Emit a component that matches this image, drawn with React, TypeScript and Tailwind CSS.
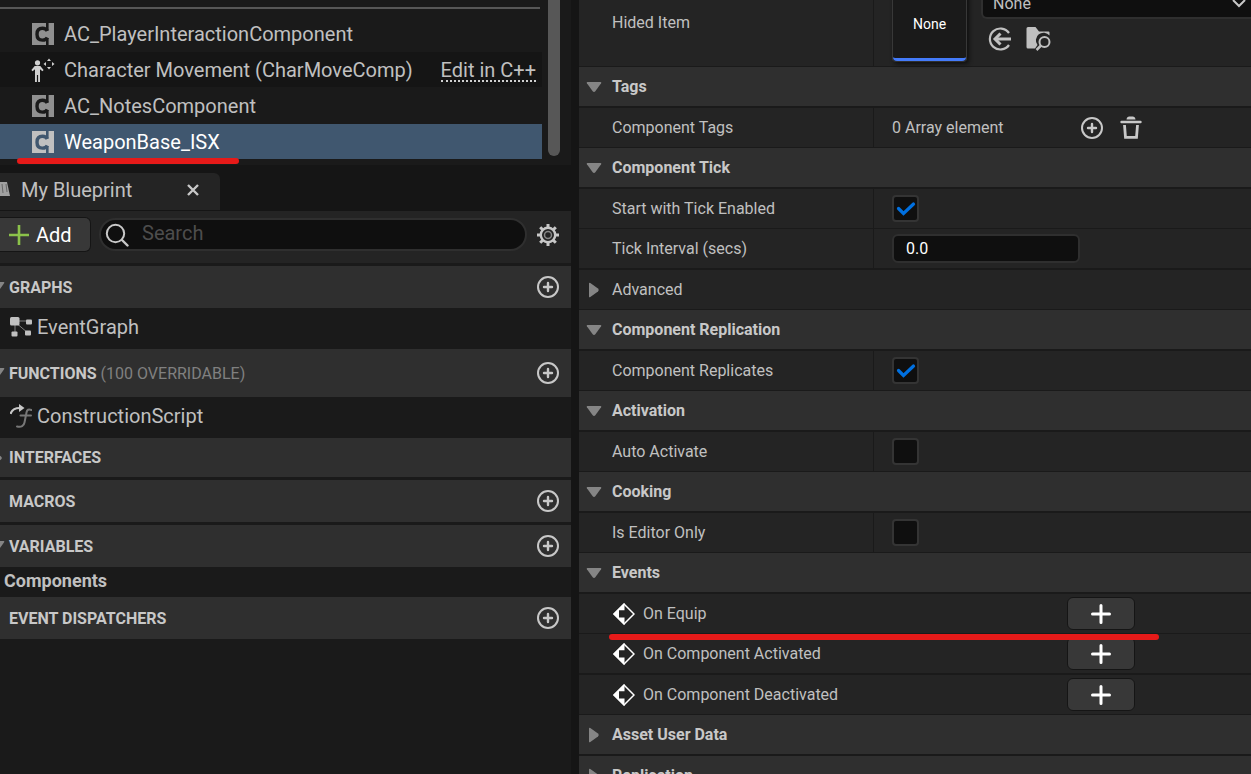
import { useId, useState, type ReactNode } from 'react';
import clsx from 'clsx';

interface ComponentItem {
  name: string;
  icon: 'component' | 'movement';
  native?: boolean;
}

const components: ComponentItem[] = [
  { name: 'AC_PlayerInteractionComponent', icon: 'component' },
  { name: 'Character Movement (CharMoveComp)', icon: 'movement', native: true },
  { name: 'AC_NotesComponent', icon: 'component' },
  { name: 'WeaponBase_ISX', icon: 'component' },
];

function ComponentIcon() {
  const maskId = useId();
  return (
    <svg width="22" height="22" viewBox="0 0 22 22" className="shrink-0">
      <mask id={maskId}>
        <rect width="22" height="22" fill="#fff" />
        <path d="M15.300 0v7.500M15.300 15v7" stroke="#000" strokeWidth="2.600" />
        <path
          d="M15.300 8C14.300 6 12.500 5.300 10.500 5.300 7 5.300 5 7.300 5 11.200s2 5.900 5.500 5.900c2 0 3.800-.7 4.800-2.700"
          fill="none"
          stroke="#000"
          strokeWidth="3.400"
        />
      </mask>
      <rect width="22" height="22" fill="currentColor" mask={`url(#${maskId})`} />
    </svg>
  );
}

function MovementIcon() {
  return (
    <svg width="24" height="24" viewBox="0 0 24 24" fill="currentColor" className="shrink-0">
      <circle cx="6.500" cy="4.800" r="2.600" />
      <path d="M3.700 8h5.600l3.300 4-1.200 1.200-2.400-2V24H7.100v-7H5.900v7H4V11.200l-2.400 2L.4 12z" />
      <path d="M18 .5l2 2.500h-4zM18 11.500l2-2.500h-4zM12.500 6l2.500-2v4zM23.500 6L21 4v4z" />
    </svg>
  );
}

function PlusCircle() {
  return (
    <svg width="24" height="24" viewBox="0 0 24 24" fill="none" stroke="currentColor" strokeWidth="2">
      <circle cx="12" cy="12" r="10" />
      <path d="M12 8v8M8 12h8" strokeWidth="2.400" strokeLinecap="round" />
    </svg>
  );
}

function TrashIcon() {
  return (
    <svg width="24" height="24" viewBox="0 0 24 24" fill="none" stroke="currentColor" strokeWidth="2">
      <path d="M2.500 6h19" strokeWidth="2.400" strokeLinecap="round" />
      <path d="M7.500 3.500C8 .8 9 .5 12 .5s4 .3 4.500 3z" fill="currentColor" stroke="none" />
      <path d="M5.500 9l1 12.300h11l1-12.300" strokeWidth="2.800" />
    </svg>
  );
}

function GearIcon() {
  return (
    <svg width="24" height="24" viewBox="0 0 24 24" fill="none" stroke="currentColor">
      <circle cx="12" cy="12" r="7.200" strokeWidth="2.400" />
      <circle cx="12" cy="12" r="3.500" strokeWidth="1.500" opacity="0.6" />
      <path
        d="M12 1v4M12 19v4M1 12h4M19 12h4M4.200 4.200L7 7M17 17l2.800 2.800M4.200 19.800L7 17M17 7l2.800-2.800"
        strokeWidth="3"
      />
    </svg>
  );
}

function PlusIcon() {
  return (
    <svg width="20" height="20" viewBox="0 0 20 20" stroke="currentColor" strokeWidth="3" strokeLinecap="round">
      <path d="M10 1.500v17M1.500 10h17" />
    </svg>
  );
}

function EventIcon() {
  return (
    <svg width="22" height="22" viewBox="0 0 22 22" className="shrink-0 text-white">
      <path d="M11 1l10 10-10 10L1 11z" fill="none" stroke="currentColor" strokeWidth="1.500" />
      <path d="M11.500 0v7.300H6v7.200h5.500V22L0 11z" fill="currentColor" />
    </svg>
  );
}

function Arrow({ open }: { open: boolean }) {
  return (
    <svg width="16" height="16" viewBox="0 0 16 16" fill="#858585" className="shrink-0">
      {open ? (
        <path d="M1.300 3h13.400q1 .3.400 1.300L9.500 12q-1.500 1.800-3 0L.9 4.300Q.3 3.300 1.300 3z" />
      ) : (
        <path d="M3 1.300q.3-1 1.300-.4L12 6.500q1.600 1.500 0 3L4.300 15.100q-1 .6-1.300-.4z" />
      )}
    </svg>
  );
}

function GraphIcon() {
  return (
    <svg width="22" height="20" viewBox="0 0 22 20" fill="currentColor" className="shrink-0">
      <path d="M5 4h14M5 5v12M5 5l13 11" stroke="currentColor" strokeWidth="1" opacity="0.6" />
      <rect x="0" y="0" width="9.500" height="8.500" rx="1.500" />
      <rect x="16" y="2.500" width="6" height="5" rx="1" />
      <rect x="1.500" y="14.500" width="6" height="5" rx="1" />
      <rect x="15" y="13.500" width="6" height="5" rx="1" />
    </svg>
  );
}

function FunctionIcon() {
  return (
    <svg width="22" height="24" viewBox="0 0 22 24" fill="none" className="shrink-0">
      <path d="M.5 10C1.500 6.500 4.500 4 10 4" stroke="#c8c8c8" strokeWidth="2.200" />
      <path d="M9 0l5.500 4L9 8z" fill="#c8c8c8" />
      <path
        d="M21.500 6c-3-1.200-4.500-.3-5 2.500l-2 10c-.6 3.300-3.200 5.200-7.500 4M10.500 11.500H21"
        stroke="#777"
        strokeWidth="2"
        strokeLinecap="round"
      />
    </svg>
  );
}

function SearchIcon() {
  return (
    <svg width="24" height="24" viewBox="0 0 24 24" fill="none" stroke="currentColor" strokeWidth="2" className="shrink-0">
      <circle cx="10.500" cy="10.500" r="8.700" />
      <path d="M17 17l5.500 5.500" strokeWidth="2.400" strokeLinecap="round" />
    </svg>
  );
}

function ComponentTree() {
  const [selected, setSelected] = useState('WeaponBase_ISX');

  return (
    <section className="flex h-[165px] shrink-0 bg-[#1a1a1a] pt-[7px]">
      <div className="flex-1">
        <div className="mr-[2px] h-[2px] bg-[#575757]" />
        <ul className="mt-[7px]">
          {components.map((item) => (
            <li
              key={item.name}
              onClick={() => setSelected(item.name)}
              className={clsx(
                'relative flex h-9 items-center gap-[10px] border-b border-transparent bg-clip-padding pl-8 text-xl',
                item.name === selected ? 'bg-[#40576f] text-white' : 'even:bg-[#151515]'
              )}
            >
              <span
                className={clsx(
                  'flex w-[22px] justify-center',
                  item.name === selected ? 'text-[#c0c0c0]' : item.icon === 'component' ? 'text-[#909090]' : 'text-[#d0d0d0]'
                )}
              >
                {item.icon === 'component' ? <ComponentIcon /> : <MovementIcon />}
              </span>
              <span>{item.name}</span>
              {item.native && (
                <a href="#edit" className="mt-[2px] mr-[6px] ml-auto border-b-2 border-dotted border-[#d0d0d0] leading-5">
                  Edit in C++
                </a>
              )}
              {item.name === 'WeaponBase_ISX' && (
                <span className="absolute bottom-[-5px] left-[17px] z-10 h-[6px] w-[222px] rounded-full bg-[#e61a19]" />
              )}
            </li>
          ))}
        </ul>
      </div>
      <div className="mt-[-7px] mr-[11px] mb-[9px] ml-[6px] w-3 rounded-b-full bg-[#575757]" />
    </section>
  );
}

interface CategoryProps {
  title: string;
  note?: string;
  arrow?: 'open' | 'closed';
  addable?: boolean;
  className?: string;
}

function Category({ title, note, arrow, addable = true, className = 'h-[42px]' }: CategoryProps) {
  return (
    <div className={clsx('relative flex items-center bg-[#2f2f2f] pr-[11px] pl-[9px]', className)}>
      {arrow && (
        <span className="absolute left-[-11px]">
          <Arrow open={arrow === 'open'} />
        </span>
      )}
      <h3 className="pt-px text-base font-bold text-[#c8c8c8]">
        {title} {note && <span className="font-normal text-[#808080]">{note}</span>}
      </h3>
      {addable && (
        <button aria-label={`Add ${title}`} className="ml-auto text-[#c8c8c8]">
          <PlusCircle />
        </button>
      )}
    </div>
  );
}

function MyBlueprint() {
  return (
    <section className="flex flex-1 flex-col">
      <div className="flex h-[46px] items-end bg-[#151515] pb-px">
        <div className="flex h-[37px] w-[220px] items-center rounded-tr-md bg-[#242424] pb-[3px]">
          <svg width="11" height="20" viewBox="0 0 11 20" className="shrink-0">
            <path d="M0 2h7l3 14H0z" fill="#a0a0a0" />
            <path d="M2 4l1 9M6 4l1 8" stroke="#666" />
          </svg>
          <span className="ml-[10px] text-xl">My Blueprint</span>
          <button aria-label="Close tab" className="mr-[21px] ml-auto">
            <svg width="12" height="12" viewBox="0 0 12 12" stroke="#c8c8c8" strokeWidth="2.400">
              <path d="M1 1l10 10M11 1L1 11" />
            </svg>
          </button>
        </div>
      </div>

      <div className="flex h-[52px] items-center bg-[#242424] pr-[11px] pb-[5px]">
        <button className="flex h-[35px] w-[91px] items-center gap-[7px] rounded-r-md border border-l-0 border-[#151515] bg-[#383838] pl-[9px] text-xl text-white">
          <svg width="20" height="20" viewBox="0 0 20 20" stroke="#8bc24a" strokeWidth="2.600">
            <path d="M10 0v20M0 10h20" />
          </svg>
          Add
        </button>
        <label className="ml-2 flex h-[33px] flex-1 items-center gap-[13px] rounded-full border-2 border-[#2f2f2f] bg-[#0f0f0f] pl-1 text-[#c8c8c8]">
          <SearchIcon />
          <input
            type="search"
            placeholder="Search"
            aria-label="Search"
            className="w-full bg-transparent pb-[3px] text-xl outline-none placeholder:text-[#4d4d4d]"
          />
        </label>
        <button aria-label="Settings" className="ml-[9px] text-[#c8c8c8]">
          <GearIcon />
        </button>
      </div>

      <div className="mt-[3px]">
        <Category title="GRAPHS" arrow="open" />
        <div className="flex h-[41px] items-center gap-[5px] pb-1 pl-[10px] text-xl">
          <GraphIcon />
          EventGraph
        </div>
        <Category title="FUNCTIONS" note="(100 OVERRIDABLE)" arrow="open" className="h-12" />
        <div className="flex h-[41px] items-center gap-[5px] pb-1 pl-[10px] text-xl">
          <FunctionIcon />
          ConstructionScript
        </div>
        <Category title="INTERFACES" arrow="closed" addable={false} className="h-[39px]" />
        <Category title="MACROS" className="mt-[3px] h-[42px]" />
        <Category title="VARIABLES" arrow="open" className="mt-[3px] h-[42px]" />
        <div className="flex h-[30px] items-center pb-[3px] pl-1 text-lg font-bold">Components</div>
        <Category title="EVENT DISPATCHERS" />
      </div>
    </section>
  );
}

function Section({ title, open = true }: { title: string; open?: boolean }) {
  return (
    <div className="flex h-[41px] items-center gap-[10px] border-b-2 border-[#1a1a1a] bg-[#2f2f2f] pl-[7px]">
      <Arrow open={open} />
      <h2 className="font-bold text-[#c8c8c8]">{title}</h2>
    </div>
  );
}

interface PropertyProps {
  label: string;
  id?: string;
  className?: string;
  children: ReactNode;
}

function Property({ label, id, className = 'h-10 border-b', children }: PropertyProps) {
  return (
    <div className={clsx('flex border-[#1a1a1a]', className)}>
      <label htmlFor={id} className="flex w-[295px] shrink-0 items-center border-r border-[#1a1a1a] pl-[33px]">
        {label}
      </label>
      <div className="flex flex-1 items-center pl-[18px]">{children}</div>
    </div>
  );
}

function Checkbox({ id, defaultChecked }: { id: string; defaultChecked?: boolean }) {
  return (
    <span className="relative size-[27px]">
      <input
        id={id}
        type="checkbox"
        defaultChecked={defaultChecked}
        className="peer block size-full appearance-none rounded border-2 border-[#343434] bg-[#0f0f0f]"
      />
      <svg
        width="27"
        height="27"
        viewBox="0 0 27 27"
        className="pointer-events-none absolute top-0 left-0 hidden peer-checked:block"
        fill="none"
        stroke="#0070e0"
        strokeWidth="3.200"
      >
        <path d="M6.500 13.500l5 5L21.500 9" strokeLinecap="round" />
      </svg>
    </span>
  );
}

function EventRow({ name, marked, className = 'h-10 border-b' }: { name: string; marked?: boolean; className?: string }) {
  return (
    <div className={clsx('relative flex items-center border-[#1a1a1a] pl-[34px]', className)}>
      <EventIcon />
      <span className="ml-2 w-[424px]">{name}</span>
      <button
        aria-label={`Add ${name}`}
        className="flex h-[33px] w-[68px] items-center justify-center rounded-md border border-[#151515] bg-[#383838] text-white"
      >
        <PlusIcon />
      </button>
      {marked && (
        <span className="absolute bottom-[-7px] left-[30px] z-10 h-[6px] w-[550px] rounded-full bg-[#e61a19]" />
      )}
    </div>
  );
}

function Details() {
  return (
    <section className="min-w-0 flex-1 overflow-hidden bg-[#242424]">
      {/* list is scrolled, the asset row is partly above the fold */}
      <div className="-mt-[21px]">
        <Property label="Hided Item" id="hided-item" className="h-[88px] border-b">
          <button className="flex h-[78px] w-[75px] items-center justify-center rounded border border-[#383838] border-b-[#2f2f2f] bg-[#1a1a1a] text-sm text-white shadow-[2px_2px_4px_#0f0f0f]">
            <span className="flex h-full w-full items-center justify-center rounded-b border-b-3 border-[#447bfa] pt-[5px]">
              None
            </span>
          </button>
          <div className="ml-[14px] flex-1 pb-1">
            <div className="relative">
              <select
                id="hided-item"
                className="block h-[29px] w-full appearance-none rounded-l-md border-2 border-r-0 border-[#2f2f2f] bg-[#0f0f0f] pb-px pl-[10px]"
              >
                <option>None</option>
              </select>
              <svg
                width="14"
                height="9"
                viewBox="0 0 14 9"
                className="pointer-events-none absolute top-[9px] right-[5px]"
                fill="none"
                stroke="#c8c8c8"
                strokeWidth="2"
              >
                <path d="M1 1l6 6 6-6" />
              </svg>
            </div>
            <div className="mt-2 flex gap-[14px] pl-[7px] text-[#c0c0c0]">
              <button aria-label="Use selected asset">
                <svg width="24" height="24" viewBox="0 0 24 24" fill="none" stroke="currentColor" strokeWidth="2.200">
                  <path d="M21 6a10.500 10.500 0 1 0 0 12" />
                  <path d="M23 12H8" strokeWidth="3" />
                  <path d="M12.500 6.500L7 12l5.500 5.500" strokeWidth="3" />
                </svg>
              </button>
              <button aria-label="Browse to asset">
                <svg width="26" height="24" viewBox="0 0 26 24" fill="currentColor">
                  <path d="M2 0h7.500L13 4.500h9.500q1 0 1 1V8.600A7.500 7.500 0 0 0 11.500 18L9 21.500H2q-1.500 0-1.500-1.500V1.500Q.500 0 2 0z" />
                  <g fill="none" stroke="currentColor" strokeWidth="2">
                    <circle cx="18.500" cy="15" r="5" />
                    <path d="M15 18.500L10.500 23" strokeWidth="2.500" />
                  </g>
                </svg>
              </button>
            </div>
          </div>
        </Property>

        <Section title="Tags" />
        <Property label="Component Tags">
          <span className="w-[188px]">0 Array element</span>
          <button aria-label="Add element" className="text-[#c8c8c8]">
            <PlusCircle />
          </button>
          <button aria-label="Remove all elements" className="ml-[15px] text-[#c8c8c8]">
            <TrashIcon />
          </button>
        </Property>

        <Section title="Component Tick" />
        <Property label="Start with Tick Enabled" id="tick-enabled">
          <Checkbox id="tick-enabled" defaultChecked />
        </Property>
        <Property label="Tick Interval (secs)" id="tick-interval" className="h-[41px] border-b-2">
          <input
            id="tick-interval"
            defaultValue="0.0"
            className="h-[29px] w-[188px] rounded-md border-2 border-[#2f2f2f] bg-[#0f0f0f] px-3 text-white"
          />
        </Property>
        <div className="flex h-10 items-center gap-[10px] border-b border-[#1a1a1a] pl-[7px]">
          <Arrow open={false} />
          Advanced
        </div>

        <Section title="Component Replication" />
        <Property label="Component Replicates" id="replicates">
          <Checkbox id="replicates" defaultChecked />
        </Property>

        <Section title="Activation" />
        <Property label="Auto Activate" id="auto-activate">
          <Checkbox id="auto-activate" />
        </Property>

        <Section title="Cooking" />
        <Property label="Is Editor Only" id="editor-only">
          <Checkbox id="editor-only" />
        </Property>

        <Section title="Events" />
        <EventRow name="On Equip" marked />
        <EventRow name="On Component Activated" className="h-[41px] border-b-2" />
        <EventRow name="On Component Deactivated" />

        <Section title="Asset User Data" open={false} />
        <Section title="Replication" open={false} />
      </div>
    </section>
  );
}

export default function App() {
  return (
    <main className="flex h-screen gap-2 overflow-hidden bg-[#151515] font-[Roboto,sans-serif] text-base text-[#c0c0c0]">
      <div className="flex w-[571px] shrink-0 flex-col bg-[#1a1a1a]">
        <ComponentTree />
        <MyBlueprint />
      </div>
      <Details />
    </main>
  );
}
